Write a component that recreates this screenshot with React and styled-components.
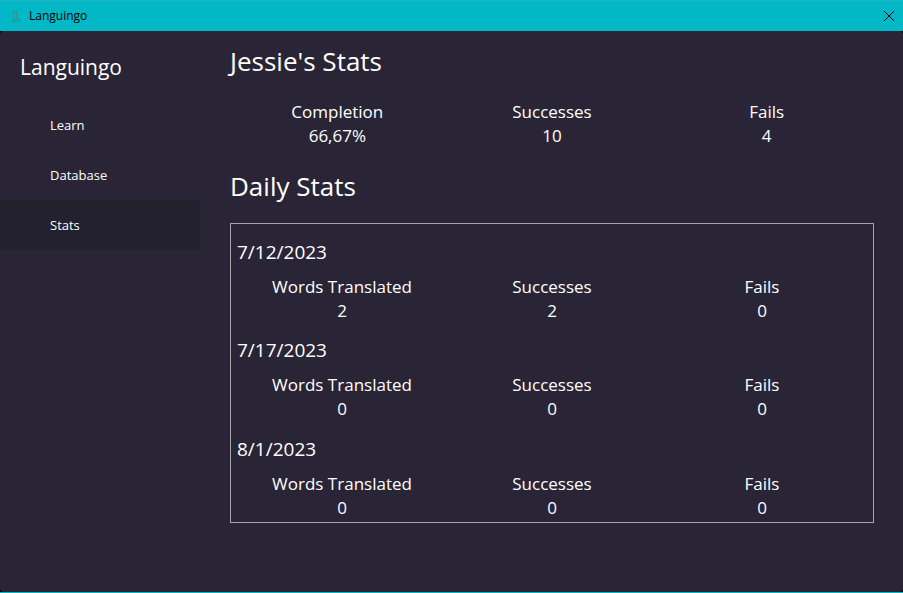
import React from 'react';
import styled, { createGlobalStyle } from 'styled-components';

const GlobalStyle = createGlobalStyle`
  * { box-sizing: border-box; }
  html, body, #root { height: 100%; }
  body {
    margin: 0;
    background: #000;
    color: #fff;
    font-family: "Segoe UI", "Open Sans", "Noto Sans", sans-serif;
  }
`;

const Window = styled.div`
  display: flex;
  flex-direction: column;
  min-height: 100vh;
  border-bottom: 1px solid #02b8c6;
`;

const TitleBar = styled.header`
  display: flex;
  align-items: center;
  height: 31px;
  padding-left: 12px;
  background: #02b8c6;
  border-top: 1px solid #1fb6c5;
  color: #000;
`;

const TitleText = styled.span`
  flex: 1;
  margin-left: 8px;
  font-size: 12px;
  line-height: 16px;
`;

const CloseButton = styled.button`
  display: flex;
  align-items: center;
  justify-content: center;
  width: 28px;
  height: 30px;
  padding: 0;
  border: 0;
  background: none;
  color: #000;
`;

const Body = styled.div`
  display: flex;
  flex: 1;
  background: #292537;
  border-radius: 4px;
`;

const Sidebar = styled.aside`
  flex: 0 0 200px;
  padding-top: 20px;
`;

const Brand = styled.h1`
  margin: 0 0 17px;
  padding-left: 20px;
  font-size: 21px;
  font-weight: 400;
  line-height: 32px;
`;

const NavLink = styled.a`
  display: block;
  padding-left: 50px;
  font-size: 13px;
  line-height: 50px;
  color: #fff;
  text-decoration: none;
  background: ${(p) => (p.$active ? '#24212e' : 'transparent')};
`;

const Content = styled.main`
  flex: 1;
  padding: 12px 29px 0 30px;
`;

const Heading = styled.h2`
  margin: 0;
  font-size: 26px;
  font-weight: 400;
  line-height: 36px;
`;

const StatRow = styled.dl`
  display: grid;
  grid-template-columns: repeat(3, 1fr);
  margin: 0;
  text-align: center;
  font-size: 17px;
  line-height: 24px;
`;

const Summary = styled.section`
  padding: 21px 0 20px;
`;

const Label = styled.dt``;

const Value = styled.dd`
  margin: 0;
`;

const DayList = styled.section`
  display: grid;
  grid-auto-rows: 1fr;
  min-height: 300px;
  margin-top: 19px;
  padding: 0 6px 2px;
  border: 1px solid #a6a5ab;
`;

const Day = styled.article`
  display: flex;
  flex-direction: column;
  justify-content: flex-end;
`;

const DayTitle = styled.h3`
  margin: 0 0 8px;
  font-size: 19px;
  font-weight: 400;
  line-height: 30px;
`;

const pages = ['Learn', 'Database', 'Stats'];

const days = [
  { date: '7/12/2023', translated: 2, successes: 2, fails: 0 },
  { date: '7/17/2023', translated: 0, successes: 0, fails: 0 },
  { date: '8/1/2023', translated: 0, successes: 0, fails: 0 },
];

function Stats({ items }) {
  return (
    <StatRow>
      {items.map(([label, value]) => (
        <div key={label}>
          <Label>{label}</Label>
          <Value>{value}</Value>
        </div>
      ))}
    </StatRow>
  );
}

function Logo() {
  return (
    <svg width="9" height="13" viewBox="0 0 9 13" fill="none" stroke="#2a9592" strokeWidth="1" aria-hidden="true">
      <path d="M1 1.5 4.5 1v7.5l3 .5v2.5h-6.500z" />
      <path d="M2.500 3v7H7" stroke="#16a6ad" />
    </svg>
  );
}

export default function App() {
  return (
    <>
      <GlobalStyle />
      <Window>
        <TitleBar>
          <Logo />
          <TitleText>Languingo</TitleText>
          <CloseButton aria-label="Close">
            <svg width="12" height="12" viewBox="0 0 12 12" stroke="currentColor" strokeWidth="1" aria-hidden="true">
              <path d="M1 1l10 10M11 1L1 11" />
            </svg>
          </CloseButton>
        </TitleBar>
        <Body>
          <Sidebar>
            <Brand>Languingo</Brand>
            <nav>
              {pages.map((page) => (
                <NavLink key={page} href={`#${page.toLowerCase()}`} $active={page === 'Stats'}>
                  {page}
                </NavLink>
              ))}
            </nav>
          </Sidebar>
          <Content>
            <Heading>Jessie's Stats</Heading>
            <Summary>
              <Stats items={[['Completion', '66,67%'], ['Successes', 10], ['Fails', 4]]} />
            </Summary>
            <Heading>Daily Stats</Heading>
            <DayList>
              {days.map((day) => (
                <Day key={day.date}>
                  <DayTitle>{day.date}</DayTitle>
                  <Stats
                    items={[
                      ['Words Translated', day.translated],
                      ['Successes', day.successes],
                      ['Fails', day.fails],
                    ]}
                  />
                </Day>
              ))}
            </DayList>
          </Content>
        </Body>
      </Window>
    </>
  );
}
